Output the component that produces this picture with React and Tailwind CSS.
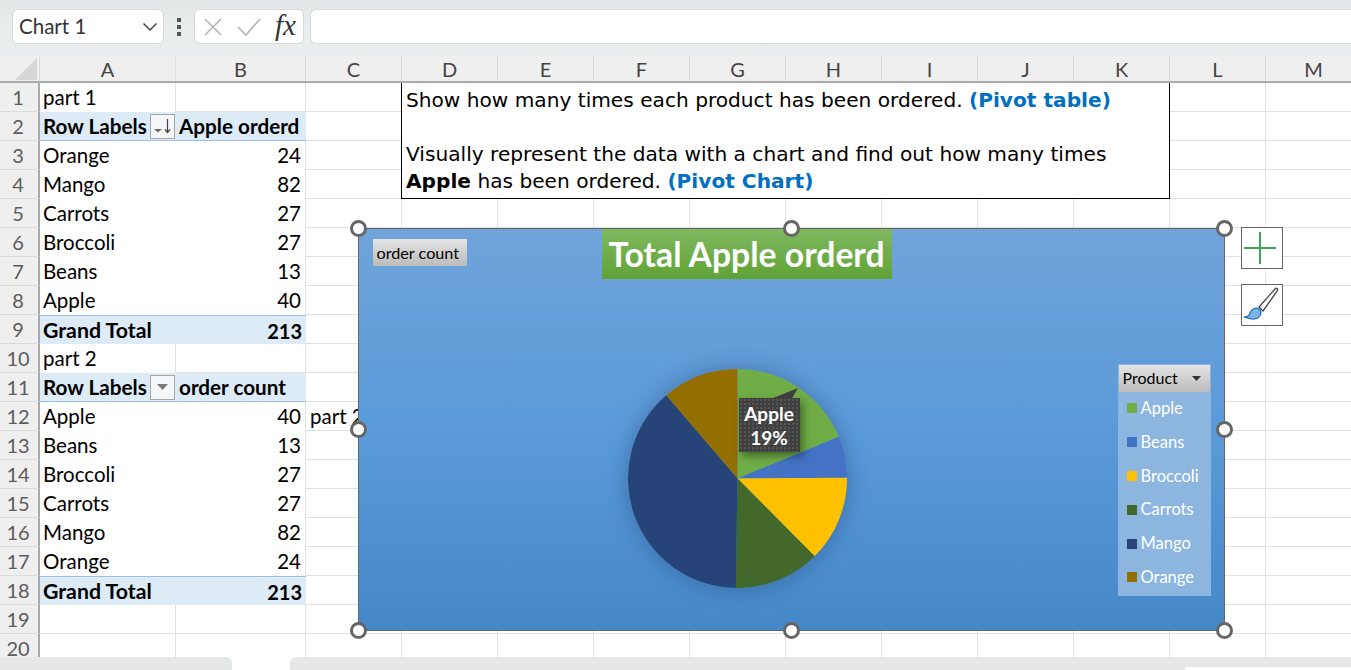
import React from "react";

const COLS = ["A","B","C","D","E","F","G","H","I","J","K","L","M"];
const colW = (i) => (i === 0 ? "w-[136px]" : i === 1 ? "w-[130px]" : "w-[96px]");

const SLICES = [
  { name: "Apple", v: 40, c: "#70ad47" },
  { name: "Beans", v: 13, c: "#4472c4" },
  { name: "Broccoli", v: 27, c: "#ffc000" },
  { name: "Carrots", v: 27, c: "#43682b" },
  { name: "Mango", v: 82, c: "#264478" },
  { name: "Orange", v: 24, c: "#936e00" },
];

function Pie() {
  let acc = 0;
  const R = 109.5;
  const pt = (a) => [R + R * Math.sin(a), R - R * Math.cos(a)];
  return (
    <svg width="219" height="219" viewBox="0 0 219 219" className="block">
      {SLICES.map((s) => {
        const a0 = (acc / 213) * 2 * Math.PI;
        acc += s.v;
        const a1 = (acc / 213) * 2 * Math.PI;
        const [x0, y0] = pt(a0);
        const [x1, y1] = pt(a1);
        const large = a1 - a0 > Math.PI ? 1 : 0;
        return <path key={s.name} d={`M${R} ${R}L${x0} ${y0}A${R} ${R} 0 ${large} 1 ${x1} ${y1}Z`} fill={s.c} />;
      })}
    </svg>
  );
}

function SortBtn({ sorted }) {
  return (
    <div className="w-[25px] h-[25px] bg-[#f4f6f8] border border-[#a6a6a6] flex items-center justify-center shrink-0">
      {sorted ? (
        <svg width="21" height="19" viewBox="0 0 21 19">
          <path d="M2 12h8l-4 3.500z" fill="#6b6b6b" />
          <path d="M15.500 2v13.500M13 12.500l2.500 3 2.500-3" stroke="#444" strokeWidth="1.2" fill="none" />
        </svg>
      ) : (
        <svg width="13" height="8" viewBox="0 0 13 8">
          <path d="M1 1h11L6.500 7z" fill="#7a7a7a" />
        </svg>
      )}
    </div>
  );
}

function Blank({ i }) {
  return <div className={`${colW(i)} h-full border-r border-b border-[#e1e1e1] shrink-0`} />;
}

function Row({ n, children, from = 0 }) {
  return (
    <div className="flex h-[29px] shrink-0">
      <div className="w-[40px] shrink-0 h-full bg-[#efefef] border-r-2 border-b border-r-[#ababab] border-b-[#dcdcdc] flex items-center justify-center text-[#5c5c5c] text-[20px] pr-[2px]">
        {n}
      </div>
      {children}
      {COLS.slice(from).map((c, k) => (
        <Blank key={c} i={from + k} />
      ))}
    </div>
  );
}

function PivotHead({ n, sorted, title }) {
  return (
    <Row n={n} from={2}>
      <div className="w-[136px] shrink-0 h-full bg-[#ddebf7] border-b border-[#9bc2e6] flex items-center justify-between pl-[3px] pr-[1px] font-bold text-[20.7px] text-black whitespace-nowrap">
        <span className="pt-[1px]">Row Labels</span>
        <SortBtn sorted={sorted} />
      </div>
      <div className="w-[130px] shrink-0 h-full bg-[#ddebf7] border-b border-[#9bc2e6] flex items-center pl-[3px] pt-[1px] font-bold text-[20.7px] text-black whitespace-nowrap">
        {title}
      </div>
    </Row>
  );
}

function PivotRow({ n, label, value, extra }) {
  return (
    <Row n={n} from={extra ? 3 : 2}>
      <div className="w-[136px] shrink-0 h-full flex items-center pl-[3px] text-[20.5px] text-black">{label}</div>
      <div className="w-[130px] shrink-0 h-full flex items-center justify-end pr-[4px] text-[20.5px] text-black border-r border-[#e1e1e1]">{value}</div>
      {extra && (
        <div className="w-[96px] shrink-0 h-full flex items-center pl-[4px] text-[20.5px] text-black border-r border-b border-[#e1e1e1] whitespace-nowrap">{extra}</div>
      )}
    </Row>
  );
}

function PivotTotal({ n }) {
  return (
    <Row n={n} from={2}>
      <div className="w-[136px] shrink-0 h-full bg-[#ddebf7] border-t border-[#9bc2e6] flex items-center pl-[3px] pt-[1px] font-bold text-[21.3px] text-black whitespace-nowrap">Grand Total</div>
      <div className="w-[130px] shrink-0 h-full bg-[#ddebf7] border-t border-[#9bc2e6] flex items-center justify-end pr-[4px] pt-[1px] font-bold text-[20px] text-black">213</div>
    </Row>
  );
}

function PartRow({ n, text }) {
  return (
    <Row n={n} from={1}>
      <div className="w-[136px] shrink-0 h-full flex items-center pl-[3px] text-[20.5px] text-black border-r border-[#e1e1e1]">{text}</div>
    </Row>
  );
}

function Handle({ cls }) {
  return <div className={`absolute w-[17px] h-[17px] rounded-full bg-white border-[3px] border-[#656565] ${cls}`} />;
}

export default function App() {
  return (
    <div className="w-[1351px] h-[670px] overflow-hidden flex flex-col bg-white relative font-['Lato','Noto_Sans',sans-serif]">
      {/* formula bar */}
      <div className="h-[55px] shrink-0 bg-gradient-to-b from-[#e3e6e6] via-[#e9eded] to-[#e9eded] flex items-start pt-[9px] pl-[12px]">
        <div className="w-[152px] h-[35px] bg-white rounded-[6px] border border-[#d8dada] flex items-center pl-[6px] pr-[5px] justify-between text-[20.5px] text-[#333]">
          <span>Chart 1</span>
          <svg width="16" height="10" viewBox="0 0 16 10"><path d="M1.500 1.500L8 8l6.500-6.500" stroke="#444" strokeWidth="1.5" fill="none" /></svg>
        </div>
        <div className="w-[30px] h-[35px] flex flex-col items-center justify-center gap-[3px]">
          <div className="w-[4px] h-[4px] bg-[#555]" />
          <div className="w-[4px] h-[4px] bg-[#555]" />
          <div className="w-[4px] h-[4px] bg-[#555]" />
        </div>
        <div className="w-[110px] h-[35px] bg-white rounded-[6px] border border-[#d8dada] flex items-center pl-[8px]">
          <svg width="20" height="20" viewBox="0 0 20 20"><path d="M2 2l16 16M18 2L2 18" stroke="#b4b4b4" strokeWidth="1.6" fill="none" /></svg>
          <svg className="ml-[13px]" width="26" height="20" viewBox="0 0 26 20"><path d="M2 10l8 8L24 2" stroke="#b4b4b4" strokeWidth="1.6" fill="none" /></svg>
          <span className="ml-[13px] text-[29px] italic text-[#333] font-['Liberation_Serif',serif] leading-none -mt-[3px]">fx</span>
        </div>
        <div className="ml-[6px] flex-1 h-[35px] bg-white rounded-l-[6px] border border-r-0 border-[#d8dada]" />
      </div>

      {/* column headers */}
      <div className="flex h-[28px] shrink-0 bg-[#efefef] border-b-2 border-[#ababab]">
        <div className="w-[40px] shrink-0 relative border-r border-[#dcdcdc]">
          <svg className="absolute left-[15px] top-[3px]" width="22" height="22" viewBox="0 0 22 22"><path d="M22 0v22H0z" fill="#d6d6d6" /></svg>
        </div>
        {COLS.map((c, i) => (
          <div key={c} className={`${colW(i)} shrink-0 h-full border-r border-[#dcdcdc] flex items-center justify-center pt-[2px] text-[20px] text-[#444]`}>
            {c}
          </div>
        ))}
      </div>

      {/* sheet */}
      <div className="flex-1 overflow-hidden flex flex-col relative">
        <PartRow n={1} text="part 1" />
        <PivotHead n={2} sorted title="Apple orderd" />
        <PivotRow n={3} label="Orange" value="24" />
        <PivotRow n={4} label="Mango" value="82" />
        <PivotRow n={5} label="Carrots" value="27" />
        <PivotRow n={6} label="Broccoli" value="27" />
        <PivotRow n={7} label="Beans" value="13" />
        <PivotRow n={8} label="Apple" value="40" />
        <PivotTotal n={9} />
        <PartRow n={10} text="part 2" />
        <PivotHead n={11} title="order count" />
        <PivotRow n={12} label="Apple" value="40" extra="part 2" />
        <PivotRow n={13} label="Beans" value="13" />
        <PivotRow n={14} label="Broccoli" value="27" />
        <PivotRow n={15} label="Carrots" value="27" />
        <PivotRow n={16} label="Mango" value="82" />
        <PivotRow n={17} label="Orange" value="24" />
        <PivotTotal n={18} />
        <Row n={19} />
        <Row n={20} />

        {/* text box */}
        <div className="absolute left-[401px] top-0 w-[769px] h-[116px] bg-white border border-t-0 border-black pl-[4px] pt-[4px] text-[20.15px] leading-[27px] text-black font-['DejaVu_Sans',sans-serif] whitespace-nowrap">
          <div>Show how many times each product has been ordered. <b className="text-[#0070c0]">(Pivot table)</b></div>
          <div>&nbsp;</div>
          <div>Visually represent the data with a chart and find out how many times</div>
          <div><b>Apple</b> has been ordered. <b className="text-[#0070c0]">(Pivot Chart)</b></div>
        </div>

        {/* chart */}
        <div className="absolute left-[357.500px] top-[145px] w-[867px] h-[403px] border-[1.5px] border-[#666] bg-gradient-to-b from-[#70a4da] via-[#5a9ad9] to-[#4588c8]">
          <div className="absolute left-[14px] top-[10px] w-[94px] h-[27px] bg-gradient-to-b from-[#e4e4e4] to-[#bcbcbc] flex items-center justify-start pl-[4px] pt-[1px] text-[16.2px] text-black">order count</div>
          <div className="absolute left-[243px] top-0 w-[290px] h-[50px] bg-gradient-to-b from-[#80b860] to-[#5fa333] flex items-center justify-center text-white font-bold text-[33.7px] whitespace-nowrap">Total Apple orderd</div>

          {/* pie */}
          <div className="absolute left-[269px] top-[140px] w-[219px] h-[219px] rounded-full shadow-[0_0_22px_rgba(20,40,80,0.35)]">
            <Pie />
            <svg className="absolute left-[105px] top-[9px]" width="70" height="40" viewBox="0 0 70 40">
              <path d="M40 20L65 10L58 22z" fill="#404040" />
            </svg>
            <div className="absolute left-[111px] top-[29px] w-[61px] h-[54px] bg-[#404040] bg-[radial-gradient(#565656_1px,transparent_1px)] bg-[size:4px_4px] shadow-[3px_4px_8px_rgba(0,0,0,0.4)] flex flex-col items-center justify-center pt-[2px] text-white font-bold text-[19px] leading-[24px]">
              <span>Apple</span>
              <span>19%</span>
            </div>
          </div>

          {/* legend */}
          <div className="absolute left-[759px] top-[134.500px] w-[93px] h-[232px] bg-[#8cb6df] border-[1px] border-[#8cb6df]">
            <div className="h-[27px] bg-gradient-to-b from-[#e4e4e4] to-[#bcbcbc] flex items-center justify-between pl-[4px] pr-[9px] text-[16px] text-black">
              <span>Product</span>
              <svg width="9" height="5" viewBox="0 0 9 5"><path d="M0 0h9L4.500 5z" fill="#333" /></svg>
            </div>
            <div className="flex flex-col">
              {SLICES.map((s) => (
                <div key={s.name} className="h-[33.8px] flex items-center pl-[8px] gap-[4px] text-white text-[16.5px]">
                  <div className="w-[10px] h-[10px]" style={{ backgroundColor: s.c }} />
                  <span>{s.name}</span>
                </div>
              ))}
            </div>
          </div>
        </div>

        {/* selection handles */}
        <Handle cls="left-[350px] top-[137px]" />
        <Handle cls="left-[783px] top-[137px]" />
        <Handle cls="left-[1216px] top-[137px]" />
        <Handle cls="left-[350px] top-[338px]" />
        <Handle cls="left-[1216px] top-[338px]" />
        <Handle cls="left-[350px] top-[539px]" />
        <Handle cls="left-[783px] top-[539px]" />
        <Handle cls="left-[1216px] top-[539px]" />

        {/* chart side buttons */}
        <div className="absolute left-[1241px] top-[144px] w-[42px] h-[42px] bg-white border border-[#666] flex items-center justify-start pl-[1px]">
          <svg width="34" height="34" viewBox="0 0 34 34"><path d="M17 1v32M1 17h32" stroke="#3fa35b" strokeWidth="2" /></svg>
        </div>
        <div className="absolute left-[1241px] top-[201px] w-[42px] h-[42px] bg-white border border-[#666] flex items-center justify-center">
          <svg width="38" height="38" viewBox="0 0 38 38">
            <path d="M16 21L32 3c2-1.500 3-.5 2.500 1.500L20 25z" fill="#fff" stroke="#444" strokeWidth="1.3" />
            <path d="M1 31c4 0 5-1 6-4 1-4 6-6 9-4 3 2 2 7-1 9-4 2-9 1-14-1z" fill="#7db4e6" stroke="#1e70bf" strokeWidth="1.3" />
          </svg>
        </div>
      </div>

      {/* sheet tab bar */}
      <div className="absolute left-0 right-0 top-[657px] h-[13px] flex bg-white">
        <div className="w-[232px] h-full bg-[#e6e8e8] rounded-tr-[6px]" />
        <div className="w-[58px] h-full bg-white" />
        <div className="flex-1 h-full bg-[#e6e8e8] rounded-tl-[6px] relative">
          <div className="absolute left-[895px] right-0 top-[10px] h-[3px] bg-white rounded-tl-[6px]" />
        </div>
      </div>
    </div>
  );
}
